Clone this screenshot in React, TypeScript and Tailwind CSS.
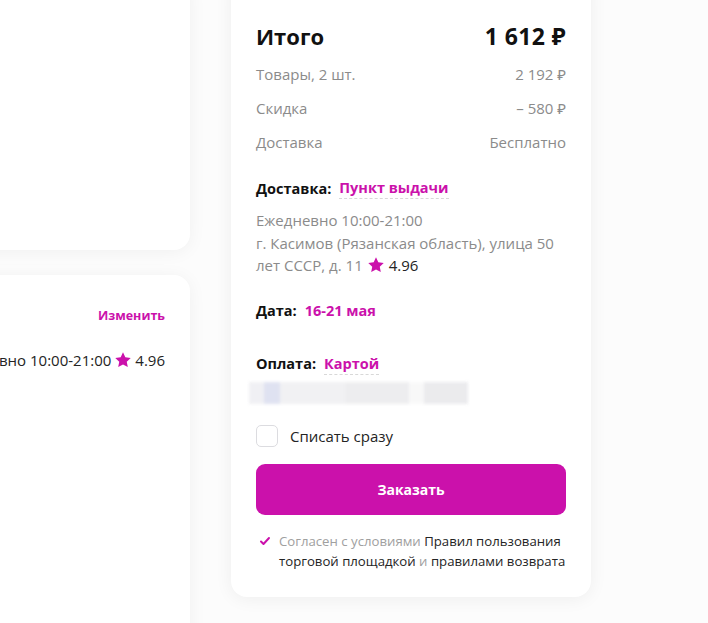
import React from "react";

const purple = "text-[#cb11ab]";

function Star({ className = "" }: { className?: string }) {
  return (
    <svg viewBox="0 0 24 24" className={className} fill="#cb11ab">
      <path d="M12 1.8l3.1 6.6 7.2.9-5.3 5 1.4 7.1L12 17.9l-6.4 3.5 1.4-7.1-5.3-5 7.2-.9z" />
    </svg>
  );
}

export default function App() {
  return (
    <div
      className="w-[708px] h-[623px] overflow-hidden bg-[#fcfcfc]"
      style={{ fontFamily: '"Open Sans", "Noto Sans", sans-serif' }}
    >
      <div className="flex gap-[41px] -mt-[24px]">
        <div className="flex flex-col gap-[25px] -ml-[30px] w-[220px] shrink-0">
          <div className="h-[274px] bg-white rounded-2xl shadow-[0_2px_18px_rgba(0,0,0,0.05)]" />
          <div className="h-[500px] bg-white rounded-2xl shadow-[0_2px_18px_rgba(0,0,0,0.05)] pt-[32px] pr-[25px] flex flex-col items-end">
            <div className={`${purple} text-[12.5px] font-bold leading-[18px]`}>Изменить</div>
            <div className="flex items-center mt-[25px] text-[15px] leading-[20px] text-[#242424] whitespace-nowrap">
              <span>вно 10:00-21:00</span>
              <Star className="w-[18px] h-[18px] mx-[3px]" />
              <span>4.96</span>
            </div>
          </div>
        </div>

        <div className="w-[360px] shrink-0 bg-white rounded-2xl shadow-[0_2px_18px_rgba(0,0,0,0.06)] px-[25px] pt-[44px] pb-[26px] h-fit">
          <div className="flex justify-between items-center text-[#111] font-bold text-[22px] leading-[32px]">
            <span>Итого</span>
            <span className="text-[23px] tracking-[0.4px]">1 612 ₽</span>
          </div>
          <div className="flex flex-col text-[15px] text-[#8b8b8b] leading-[20px] mt-[5px]">
            <div className="flex justify-between py-[7px]">
              <span>Товары, 2 шт.</span>
              <span>2 192 ₽</span>
            </div>
            <div className="flex justify-between py-[7px]">
              <span>Скидка</span>
              <span>– 580 ₽</span>
            </div>
            <div className="flex justify-between py-[7px]">
              <span>Доставка</span>
              <span>Бесплатно</span>
            </div>
          </div>

          <div className="mt-[19px] flex items-center text-[14.5px] font-bold leading-[20px]">
            <span className="text-[#111]">Доставка:</span>
            <span className={`${purple} ml-[8px] border-b border-dashed border-[#d8d8d8] leading-[20px]`}>Пункт выдачи</span>
          </div>
          <div className="mt-[10px] text-[15px] text-[#8b8b8b] leading-[22.5px]">
            <div>Ежедневно 10:00-21:00</div>
            <div>г. Касимов (Рязанская область), улица 50</div>
            <div className="flex items-center">
              лет СССР, д. 11
              <Star className="w-[18px] h-[18px] mx-[4px]" />
              <span className="text-[#242424]">4.96</span>
            </div>
          </div>

          <div className="mt-[24px] flex items-center text-[14.5px] font-bold leading-[20px]">
            <span className="text-[#111]">Дата:</span>
            <span className={`${purple} ml-[8px]`}>16-21 мая</span>
          </div>

          <div className="mt-[33px] flex items-center text-[14.5px] font-bold leading-[20px]">
            <span className="text-[#111]">Оплата:</span>
            <span className={`${purple} ml-[8px] border-b border-dashed border-[#d8d8d8]`}>Картой</span>
          </div>

          <div className="mt-[7px] -ml-[7px] flex h-[22px] blur-[1.5px] opacity-90">
            <div className="w-[15px] bg-[#efeff3]" />
            <div className="w-[16px] bg-[#dcdff0]" />
            <div className="w-[65px] bg-[#f0f0f2]" />
            <div className="w-[64px] bg-[#ececee]" />
            <div className="w-[15px] bg-[#f8f8f8]" />
            <div className="w-[44px] bg-[#e9e9ec]" />
          </div>

          <div className="mt-[21px] flex items-center gap-[12px]">
            <div className="w-[22px] h-[22px] rounded-[5px] border border-[#dcdce0] bg-white" />
            <span className="text-[15px] text-[#242424]">Списать сразу</span>
          </div>

          <button className="mt-[17px] w-full h-[51px] rounded-[9px] bg-[#cb11ab] text-white font-bold text-[14px]">
            Заказать
          </button>

          <div className="mt-[16px] flex gap-[8px] pl-[3px] text-[13.2px] leading-[20px]">
            <svg viewBox="0 0 12 12" className="w-[12px] h-[12px] mt-[4px] shrink-0" fill="none" stroke="#cb11ab" strokeWidth="2" strokeLinecap="round" strokeLinejoin="round">
              <path d="M2 6.5l2.5 2.5L10 3" />
            </svg>
            <p className="text-[#242424] leading-[20px]">
              <span className="text-[#a0a0a0]">Согласен с условиями </span>
              Правил пользования торговой площадкой
              <span className="text-[#a0a0a0]"> и </span>
              правилами возврата
            </p>
          </div>
        </div>
      </div>
    </div>
  );
}
